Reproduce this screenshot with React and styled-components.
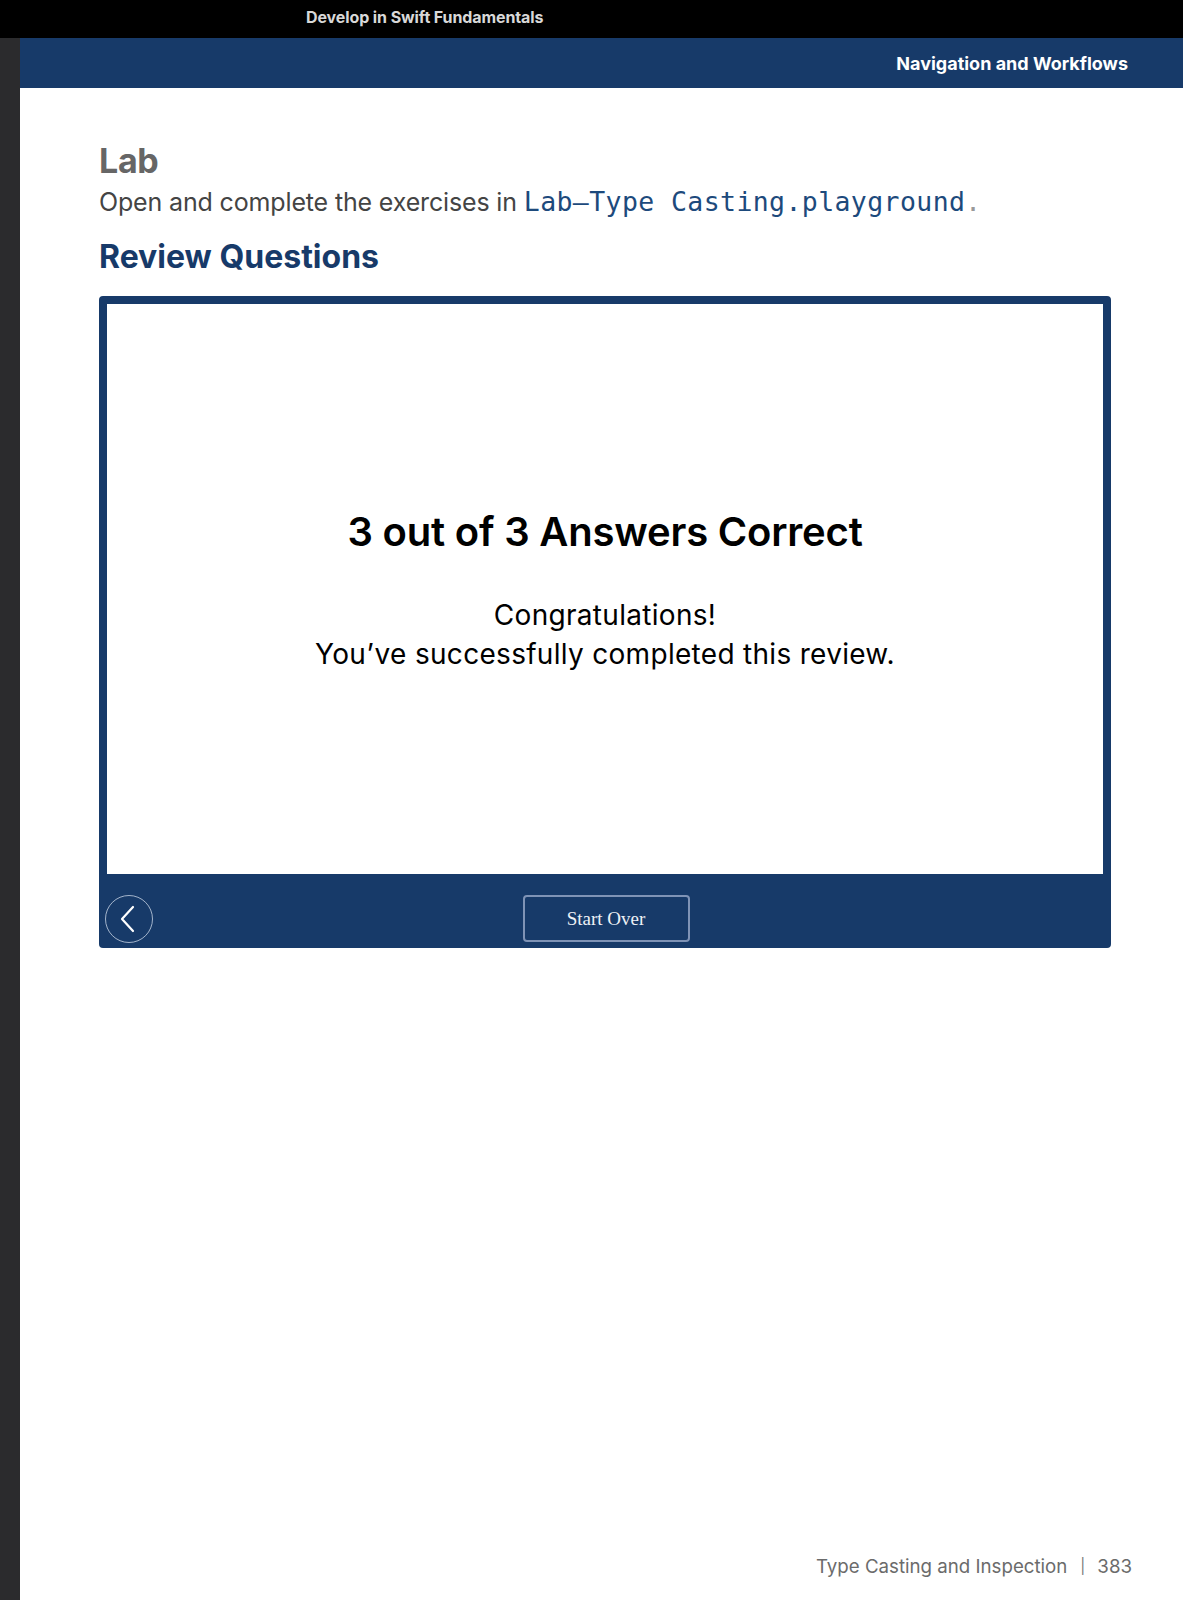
import React from 'react'
import styled, { createGlobalStyle } from 'styled-components'

const GlobalStyle = createGlobalStyle`
  html, body {
    margin: 0;
    padding: 0;
    background: #ffffff;
  }
  body {
    font-family: Inter, "Noto Sans", sans-serif;
  }
`;

const navy = '#173a69';

function App() {
  return (
    <Screen>
      <GlobalStyle />
      <TopBar>
        <BookTitle>Develop in Swift Fundamentals</BookTitle>
      </TopBar>
      <Body>
        <SideStrip />
        <Page>
          <ChapterBar>Navigation and Workflows</ChapterBar>
          <Content>
            <LabTitle>Lab</LabTitle>
            <LabText>
              Open and complete the exercises in <Code>Lab—Type Casting.playground</Code>
              <Dot>.</Dot>
            </LabText>
            <SectionTitle>Review Questions</SectionTitle>
            <ReviewBox>
              <ResultPanel>
                <Score>3 out of 3 Answers Correct</Score>
                <Message>
                  Congratulations!
                  <br />
                  You’ve successfully completed this review.
                </Message>
              </ResultPanel>
              <ReviewFooter>
                <BackButton aria-label="Back">
                  <svg width="24" height="30" viewBox="0 0 24 30" fill="none">
                    <path d="M17 3 L6 15 L17 27" stroke="#ffffff" strokeWidth="2.2" strokeLinecap="round" strokeLinejoin="round" />
                  </svg>
                </BackButton>
                <StartOver>Start Over</StartOver>
              </ReviewFooter>
            </ReviewBox>
          </Content>
          <PageFooter>
            Type Casting and Inspection<Sep>|</Sep>383
          </PageFooter>
        </Page>
      </Body>
    </Screen>
  );
}

const Screen = styled.div`
  width: 1183px;
  height: 1600px;
  display: flex;
  flex-direction: column;
  overflow: hidden;
`;

const TopBar = styled.div`
  height: 38px;
  background: #000;
  display: flex;
  align-items: center;
  padding: 0 0 5px 306px;
  box-sizing: border-box;
  flex-shrink: 0;
`;

const BookTitle = styled.div`
  color: #d8d8d8;
  font-size: 16px;
  font-weight: 700;
  letter-spacing: -0.1px;
`;

const Body = styled.div`
  flex: 1;
  display: flex;
`;

const SideStrip = styled.div`
  width: 20px;
  background: #2b2b2d;
  flex-shrink: 0;
`;

const Page = styled.div`
  flex: 1;
  display: flex;
  flex-direction: column;
  background: #fff;
`;

const ChapterBar = styled.div`
  height: 50px;
  background: ${navy};
  color: #fff;
  font-size: 18px;
  font-weight: 700;
  display: flex;
  align-items: center;
  justify-content: flex-end;
  padding-right: 55px;
  box-sizing: border-box;
`;

const Content = styled.div`
  flex: 1;
  padding: 53px 72px 0 79px;
`;

const LabTitle = styled.h2`
  margin: 0;
  font-size: 34px;
  line-height: 40px;
  font-weight: 700;
  color: #666;
  letter-spacing: -0.3px;
`;

const LabText = styled.p`
  margin: 3px 0 0;
  font-size: 25px;
  line-height: 36px;
  color: #444;
  letter-spacing: -0.15px;
`;

const Code = styled.span`
  font-family: "DejaVu Sans Mono", "Liberation Mono", monospace;
  font-size: 26.5px;
  color: #1d4a7c;
  letter-spacing: 0.4px;
`;

const Dot = styled.span`
  color: #999;
  font-family: "DejaVu Sans Mono", monospace;
  font-size: 26px;
`;

const SectionTitle = styled.h3`
  margin: 17px 0 19px;
  font-size: 32px;
  line-height: 40px;
  font-weight: 700;
  color: ${navy};
  letter-spacing: 0;
`;

const ReviewBox = styled.div`
  width: 1012px;
  background: ${navy};
  border-radius: 4px;
  padding: 8px 8px 0;
  box-sizing: border-box;
  display: flex;
  flex-direction: column;
`;

const ResultPanel = styled.div`
  height: 570px;
  background: #fff;
  display: flex;
  flex-direction: column;
  align-items: center;
  justify-content: center;
  text-align: center;
  padding: 10px 0 6px;
  box-sizing: border-box;
`;

const Score = styled.div`
  font-size: 40px;
  font-weight: 600;
  color: #000;
  letter-spacing: -0.2px;
  line-height: 48px;
  margin-bottom: 40px;
`;

const Message = styled.div`
  font-size: 28px;
  line-height: 39px;
  color: #000;
  letter-spacing: 0.3px;
`;

const ReviewFooter = styled.div`
  height: 74px;
  display: flex;
  align-items: flex-start;
  justify-content: center;
  padding-top: 21px;
  box-sizing: border-box;
  position: relative;
`;

const BackButton = styled.button`
  position: absolute;
  left: -2px;
  top: 21px;
  width: 48px;
  height: 48px;
  border-radius: 50%;
  border: 1.5px solid rgba(210, 220, 235, 0.75);
  background: transparent;
  display: flex;
  align-items: center;
  justify-content: center;
  padding: 0 3px 0 0;
  cursor: pointer;
`;

const StartOver = styled.button`
  width: 167px;
  height: 47px;
  border: 2px solid #7f93b6;
  border-radius: 4px;
  background: transparent;
  color: #eef1f6;
  font-family: "Liberation Serif", "Times New Roman", serif;
  font-size: 19px;
  cursor: pointer;
  margin-left: 2px;
`;

const PageFooter = styled.div`
  display: flex;
  justify-content: flex-end;
  align-items: center;
  padding: 0 51px 22px 0;
  font-size: 18.7px;
  color: #6b6b6b;
`;

const Sep = styled.span`
  margin: 0 12px 0 13px;
  font-size: 15px;
  color: #777;
  position: relative;
  top: -1px;
`;

export default App
